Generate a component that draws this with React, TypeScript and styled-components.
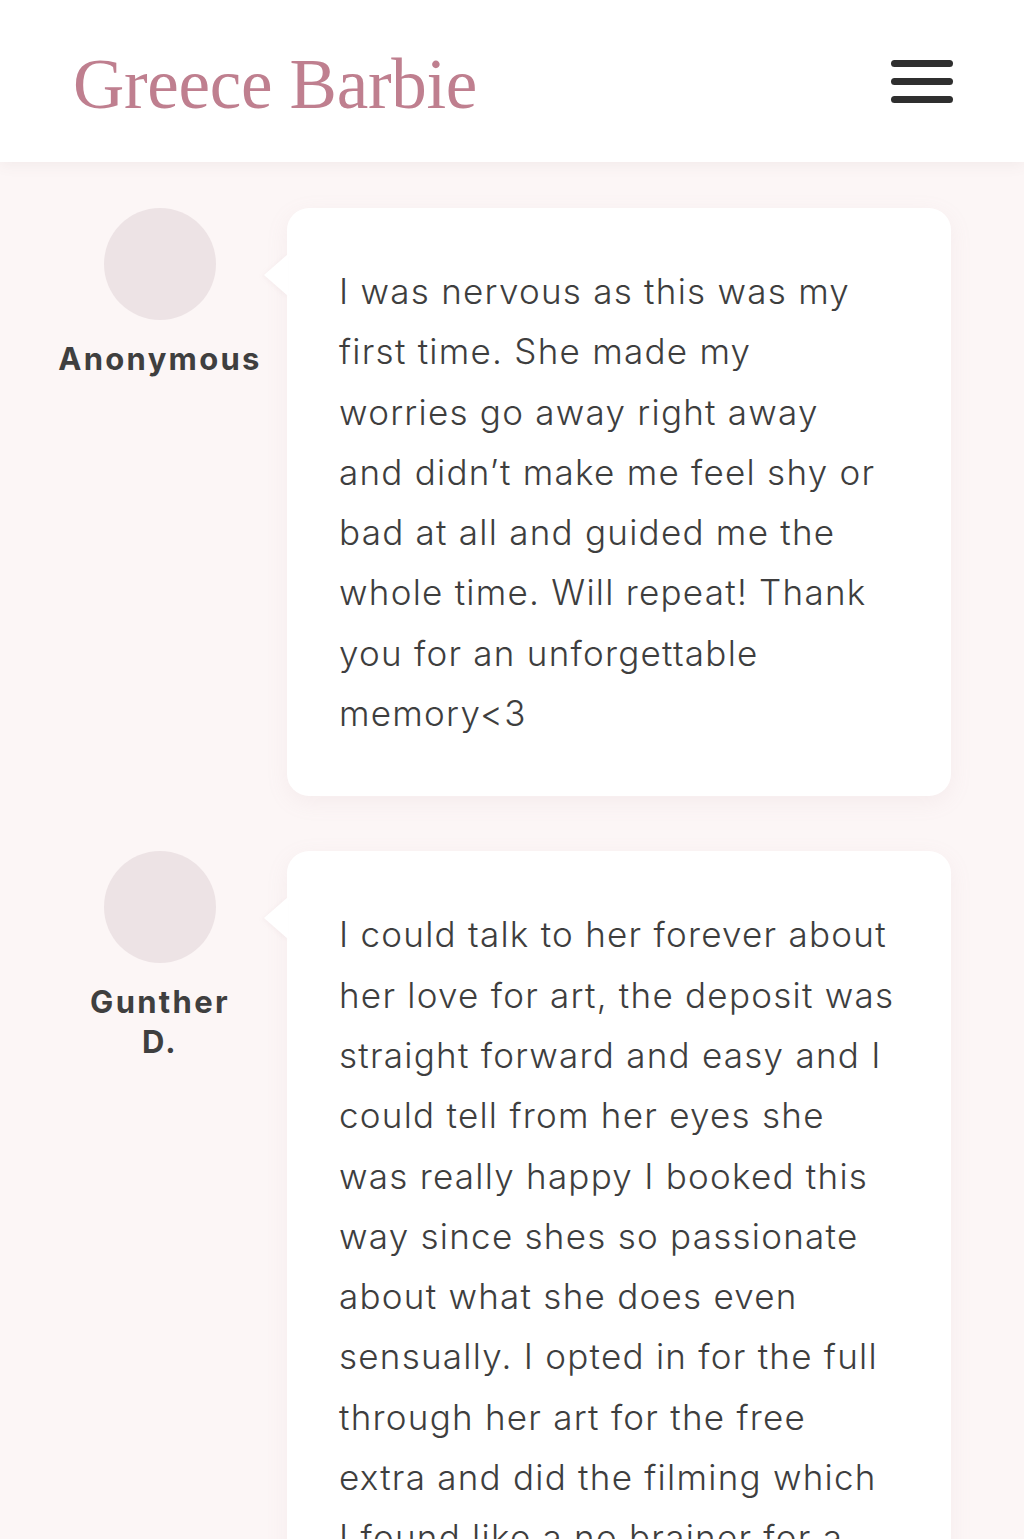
import React from "react";
import styled, { createGlobalStyle } from "styled-components";

const GlobalStyle = createGlobalStyle`
  html, body {
    margin: 0;
    padding: 0;
    background: #fcf6f6;
  }
  body {
    font-family: Inter, "Noto Sans", sans-serif;
    -webkit-font-smoothing: antialiased;
  }
`;

const Header = styled.header`
  height: 162px;
  background: #ffffff;
  display: flex;
  align-items: center;
  justify-content: space-between;
  padding: 0 71px 0 73px;
  box-shadow: 0 3px 14px rgba(120, 80, 90, 0.07);
  position: relative;
  z-index: 2;
`;

const Logo = styled.div`
  font-family: "Liberation Serif", "DejaVu Serif", serif;
  font-size: 71px;
  line-height: 1;
  color: #bf7f8f;
  letter-spacing: -0.3px;
  margin-top: 6px;
`;

const MenuButton = styled.button`
  width: 62px;
  height: 43px;
  margin-top: 1px;
  padding: 0;
  border: none;
  background: transparent;
  display: flex;
  flex-direction: column;
  justify-content: space-between;
`;

const MenuBar = styled.span`
  display: block;
  height: 7px;
  border-radius: 4px;
  background: #2f2f2f;
`;

const Main = styled.main`
  display: flex;
  flex-direction: column;
  gap: 55px;
  padding: 46px 73px 0 72px;
`;

const Review = styled.article`
  display: flex;
  align-items: flex-start;
  gap: 39px;
`;

const Author = styled.div`
  width: 176px;
  flex-shrink: 0;
  display: flex;
  flex-direction: column;
  align-items: center;
  gap: 19px;
`;

const Avatar = styled.div`
  width: 112px;
  height: 112px;
  border-radius: 50%;
  background: #ede3e5;
`;

const Name = styled.div`
  width: min-content;
  text-align: center;
  font-family: Inter, "Noto Sans", sans-serif;
  font-weight: 700;
  font-size: 31px;
  letter-spacing: 2.3px;
  line-height: 40px;
  color: #3f3f3f;
`;

const Card = styled.div`
  position: relative;
  flex: 1;
  background: #ffffff;
  border-radius: 22px;
  padding: 53px 40px 53px 52px;
  box-shadow: 0 6px 22px rgba(190, 150, 160, 0.1);

  &::before {
    content: "";
    position: absolute;
    left: -23px;
    top: 46px;
    width: 0;
    height: 0;
    border-top: 21px solid transparent;
    border-bottom: 21px solid transparent;
    border-right: 24px solid #ffffff;
    filter: drop-shadow(-2px 1px 2px rgba(190, 150, 160, 0.08));
  }
`;

const Text = styled.p`
  margin: 0;
  font-family: Inter, "Noto Sans", sans-serif;
  font-weight: 300;
  font-size: 35px;
  letter-spacing: 1.25px;
  line-height: 60.3px;
  color: #3e3e3e;
  white-space: nowrap;
`;

type ReviewData = { name: string; lines: string[] };

const reviews: ReviewData[] = [
  {
    name: "Anonymous",
    lines: [
      "I was nervous as this was my",
      "first time. She made my",
      "worries go away right away",
      "and didn’t make me feel shy or",
      "bad at all and guided me the",
      "whole time. Will repeat! Thank",
      "you for an unforgettable",
      "memory<3",
    ],
  },
  {
    name: "Gunther D.",
    lines: [
      "I could talk to her forever about",
      "her love for art, the deposit was",
      "straight forward and easy and I",
      "could tell from her eyes she",
      "was really happy I booked this",
      "way since shes so passionate",
      "about what she does even",
      "sensually. I opted in for the full",
      "through her art for the free",
      "extra and did the filming which",
      "I found like a no brainer for a",
    ],
  },
];

export default function App() {
  return (
    <>
      <GlobalStyle />
      <Header>
        <Logo>Greece Barbie</Logo>
        <MenuButton aria-label="Menu">
          <MenuBar />
          <MenuBar />
          <MenuBar />
        </MenuButton>
      </Header>
      <Main>
        {reviews.map((r) => (
          <Review key={r.name}>
            <Author>
              <Avatar />
              <Name>{r.name}</Name>
            </Author>
            <Card>
              <Text>
                {r.lines.map((l, i) => (
                  <React.Fragment key={i}>
                    {l}
                    {i < r.lines.length - 1 && <br />}
                  </React.Fragment>
                ))}
              </Text>
            </Card>
          </Review>
        ))}
      </Main>
    </>
  );
}
